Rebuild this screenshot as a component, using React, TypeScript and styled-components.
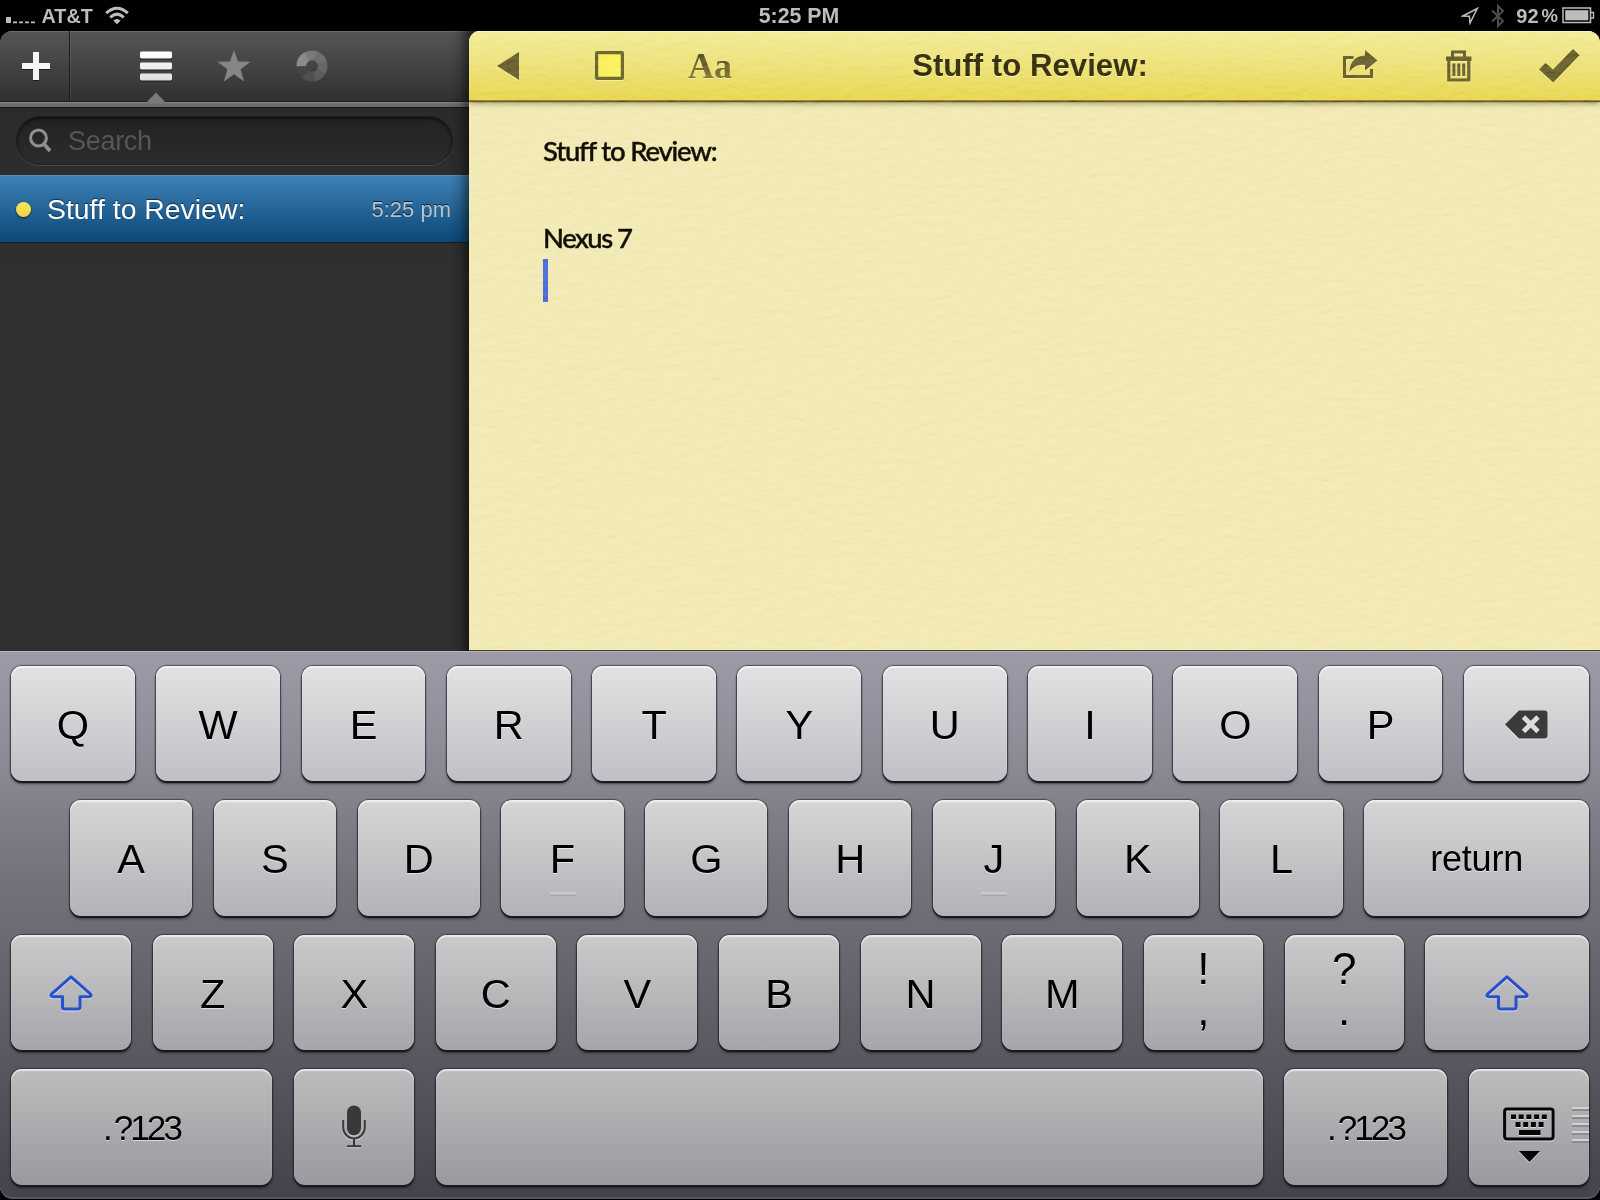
import React from 'react';
import styled, { createGlobalStyle } from 'styled-components';

const GlobalStyle = createGlobalStyle`
  *, *::before, *::after { box-sizing: border-box; }
  body { margin: 0; background: #000; }
`;

const SANS = '"Liberation Sans", Arial, sans-serif';

const Screen = styled.div`
  display: flex;
  flex-direction: column;
  width: 1600px;
  height: 1200px;
  overflow: hidden;
  background: #000;
  font-family: ${SANS};
`;

/* ---------- status bar ---------- */

const StatusBar = styled.header`
  display: grid;
  grid-template-columns: 1fr auto 1fr;
  align-items: center;
  height: 31px;
  padding: 0 5px 0 6px;
  color: #bdbdbd;
  font-weight: bold;
`;

const StatusGroup = styled.div<{ $end?: boolean }>`
  display: flex;
  align-items: center;
  height: 30px;
  justify-content: ${(p) => (p.$end ? 'flex-end' : 'flex-start')};
`;

const StatusText = styled.span<{ $size: number }>`
  font-size: ${(p) => p.$size}px;
  line-height: 30px;
  white-space: nowrap;
`;

const Clock = styled(StatusText)`
  margin-right: 3px;
  height: 30px;
`;

const StatusIcon = styled.svg<{ $ml?: number; $mt?: number }>`
  display: block;
  flex: none;
  margin-left: ${(p) => p.$ml ?? 0}px;
  margin-top: ${(p) => p.$mt ?? 0}px;
`;

/* ---------- workspace ---------- */

const Workspace = styled.main`
  display: flex;
  flex: none;
  height: 620px;
  border-radius: 12px 12px 0 0;
  overflow: hidden;
  background: linear-gradient(#262626, #1b1b1b 80px, #222);
`;

const Sidebar = styled.aside`
  position: relative;
  display: flex;
  flex-direction: column;
  width: 469px;
  background: linear-gradient(#2b2b2b 75px, #303030 240px, #303030);

  &::after {
    content: '';
    position: absolute;
    inset: 0 0 0 auto;
    width: 20px;
    background: linear-gradient(90deg, rgba(0, 0, 0, 0), rgba(0, 0, 0, 0.12) 50%, rgba(0, 0, 0, 0.48));
  }
`;

const SideToolbar = styled.nav`
  display: flex;
  flex: none;
  height: 70px;
  background: linear-gradient(#5a5a5a, #525252 3px, #505050 12px, #303030);
  box-shadow: inset 0 1px #6b6b6b;
`;

const AddButton = styled.button`
  display: flex;
  align-items: center;
  justify-content: center;
  width: 70px;
  padding: 0 0 1px 3px;
  border: 0;
  border-right: 1px solid #1d1d1d;
  background: none;
  box-shadow: 1px 0 rgba(255, 255, 255, 0.07);
`;

const Tabs = styled.div`
  display: flex;
  padding-left: 47px;
`;

const Tab = styled.button`
  position: relative;
  display: flex;
  align-items: center;
  justify-content: center;
  width: 78px;
  padding: 0 0 1px;
  border: 0;
  background: none;
`;

const TabPointer = styled.svg`
  position: absolute;
  left: 29px;
  bottom: -2px;
`;

const SideRule = styled.div`
  flex: none;
  height: 7px;
  border-top: 1px solid #202020;
  border-bottom: 1px solid #161616;
  background: linear-gradient(#858585, #6e6e6e 2px, #696969);
`;

const SearchBox = styled.label`
  display: flex;
  align-items: center;
  flex: none;
  height: 49px;
  margin: 8px 16px 10px;
  padding-left: 12px;
  border: 1px solid #1b1b1b;
  border-bottom-color: #232323;
  border-radius: 25px;
  background: linear-gradient(#222, #2c2c2c);
  box-shadow: inset 0 2px 3px rgba(0, 0, 0, 0.5), 0 1px #4a4a4a;
`;

const SearchText = styled.span`
  margin-left: 16px;
  color: #565656;
  font-size: 27px;
  letter-spacing: -0.3px;
  line-height: 46px;
`;

const NoteRow = styled.div`
  display: flex;
  align-items: center;
  flex: none;
  height: 67px;
  padding: 1px 18px 0 16px;
  background: linear-gradient(#3e82b8, #0c4878);
  box-shadow: inset 0 1px #5790bd, 0 1px #1b1b1b;
`;

const NoteDot = styled.span`
  width: 15px;
  height: 15px;
  border-radius: 50%;
  background: linear-gradient(#f7e763, #edd43c);
  box-shadow: 0 1px 2px rgba(0, 0, 0, 0.7);
`;

const NoteName = styled.span`
  flex: 1;
  margin-left: 16px;
  color: #fff;
  font-size: 28.4px;
  line-height: 59px;
  text-shadow: 0 -1px 1px rgba(0, 0, 0, 0.6);
`;

const NoteTime = styled.span`
  padding-top: 2px;
  color: #b9c3cc;
  font-size: 22px;
  text-shadow: 0 -1px rgba(0, 0, 0, 0.7);
`;

/* ---------- note ---------- */

const Note = styled.section`
  position: relative;
  display: flex;
  flex: 1;
  flex-direction: column;
  overflow: hidden;
  border-bottom: 1px solid #47422f;
  border-radius: 11px 0 0 0;
  background: #f1e8b0;
`;

const Grain = styled.svg`
  position: absolute;
  inset: 0;
  width: 100%;
  height: 100%;
  pointer-events: none;
  mix-blend-mode: soft-light;
  opacity: 0.38;
`;

const NoteToolbar = styled.div`
  display: flex;
  align-items: center;
  flex: none;
  height: 70px;
  padding: 0 20px 0 28px;
  border-bottom: 1px solid #8d8133;
  background: linear-gradient(#f2ea92, #ede27a 40%, #e7d44a);
  box-shadow: inset 0 1px #f8f3bb, 0 1px 1px rgba(60, 50, 0, 0.75), 0 2px 6px rgba(60, 50, 0, 0.55);
`;

const ToolButton = styled.button<{ $ml?: number }>`
  display: flex;
  align-items: center;
  justify-content: center;
  flex: none;
  margin: 0 0 0 ${(p) => p.$ml ?? 0}px;
  padding: 0;
  border: 0;
  background: none;
  filter: drop-shadow(0 1px rgba(255, 250, 180, 0.6));
`;

const FontLabel = styled.span`
  background: linear-gradient(#4f4a1d 20%, #7a7030 80%);
  background-clip: text;
  color: transparent;
  font: bold 36px/40px 'Liberation Serif', 'Times New Roman', serif;
`;

const Title = styled.h1`
  flex: 1;
  margin: 0;
  padding: 0 15px 0 0;
  color: #30290c;
  font-size: 31.2px;
  font-weight: bold;
  text-align: center;
  text-shadow: 0 1px rgba(255, 250, 190, 0.8);
`;

const NoteBody = styled.div`
  padding: 30px 0 0 74px;
  color: #0d0a03;
  font-family: Lato, 'Open Sans', sans-serif;
  font-size: 27.5px;
  font-weight: 500;
  -webkit-text-stroke: 0.5px #0d0a03;
`;

const Line = styled.p<{ $spacing?: number }>`
  height: 43.5px;
  margin: 0;
  letter-spacing: ${(p) => p.$spacing ?? 0}px;
  line-height: 39px;
`;

const Caret = styled.span`
  display: block;
  width: 5px;
  height: 43px;
  margin-top: -3px;
  background: #4766da;
`;

/* ---------- keyboard ---------- */

const Keyboard = styled.section`
  display: flex;
  flex: none;
  flex-direction: column;
  gap: 19px;
  height: 548px;
  padding: 14.5px 11px 0;
  border-radius: 0 0 13px 13px;
  background: linear-gradient(#9d9ba7, #8b8a95 20%, #74747d 40%, #5f5f68 66%, #43434b);
  box-shadow: inset 0 1px #b5b4bd, inset 0 -2px #55555d;
`;

const KeyRow = styled.div<{ $indent?: number }>`
  display: flex;
  gap: 21.5px;
  height: 115.5px;
  padding-left: ${(p) => p.$indent ?? 0}px;
`;

const tones = [
  ['#e2e2e3', '#c0bfc5'],
  ['#d6d6d7', '#b3b2b7'],
  ['#cbcbcc', '#a6a5aa'],
  ['#bdbdbe', '#9a999f'],
];

const KeyCap = styled.button<{ $tone: number; $width?: number }>`
  position: relative;
  display: flex;
  align-items: center;
  justify-content: center;
  flex: ${(p) => (p.$width ? `0 0 ${p.$width}px` : '1 1 0')};
  min-width: 0;
  padding: 0;
  border: 0;
  border-radius: 11px;
  background: linear-gradient(${(p) => tones[p.$tone].join(', ')});
  box-shadow:
    inset 0 2px 1px rgba(255, 255, 255, 0.6),
    0 0 1px 1px rgba(30, 30, 38, 0.6),
    0 2px 1px #15151a,
    0 3px 3px rgba(0, 0, 0, 0.45);
  color: #000;
  font-family: ${SANS};
`;

const Letter = styled.span`
  font-size: 41.5px;
  line-height: 44px;
  padding-top: 3px;
  text-shadow: 0 1px rgba(255, 255, 255, 0.55);
`;

const Word = styled.span<{ $size: number; $spacing: number }>`
  padding-top: 3px;
  font-size: ${(p) => p.$size}px;
  letter-spacing: ${(p) => p.$spacing}px;
  text-shadow: 0 1px rgba(255, 255, 255, 0.55);
`;

const Dot = styled.span`
  letter-spacing: 1px;
`;

const Punctuation = styled.span`
  display: flex;
  flex-direction: column;
  align-items: center;
  padding-bottom: 6px;
  font-size: 44px;
  text-shadow: 0 1px rgba(255, 255, 255, 0.55);
`;

const Mark = styled.span`
  height: 41px;
  line-height: 41px;
`;

const HomeMark = styled.i`
  position: absolute;
  left: calc(50% - 13px);
  bottom: 20px;
  width: 26px;
  height: 4px;
  border-top: 2px solid #cbcbce;
  border-bottom: 1px solid #a9a8ad;
`;

const Grip = styled.span`
  position: absolute;
  top: 38px;
  right: 0;
  display: flex;
  flex-direction: column;
  gap: 4px;
`;

const GripLine = styled.i`
  width: 17px;
  height: 4px;
  border-top: 2px solid #d2d2d4;
  border-bottom: 2px solid #8b8b90;
`;

const KeyIcon = styled.svg<{ $top?: number }>`
  display: block;
  margin-top: ${(p) => p.$top ?? 0}px;
  filter: drop-shadow(0 1px rgba(255, 255, 255, 0.6));
`;

const ShiftIcon = () => (
  <KeyIcon width="46" height="38" viewBox="0 0 46 38" $top={1}>
    <path
      d="M23 2.8 L42.5 20.2 Q44 22.6 41 22.8 H32 V33 Q32 35 30 35 H16.5 Q14.5 35 14.5 33 V22.8 H5 Q2 22.6 3.5 20.2 Z"
      fill="none"
      stroke="#2850cb"
      strokeWidth="3.1"
      strokeLinejoin="round"
    />
  </KeyIcon>
);

const DonutIcon = () => {
  const shades = ['#7a7a7a', '#707070', '#666', '#5c5c5c', '#505050', '#454545'];
  const point = (deg: number, r: number) => {
    const a = (deg * Math.PI) / 180;
    return `${16 + r * Math.cos(a)} ${16 + r * Math.sin(a)}`;
  };
  const wedge = (from: number, to: number) =>
    `M${point(from, 15.5)} A15.5 15.5 0 0 1 ${point(to, 15.5)} L${point(to, 5.8)} A5.8 5.8 0 0 0 ${point(from, 5.8)} Z`;
  return (
    <svg width="32" height="32" viewBox="0 0 32 32">
      <path d={wedge(178, 242)} fill="#8b8b8b" />
      {shades.map((c, i) => (
        <path key={c} d={wedge(240 + i * 50, Math.min(291 + i * 50, 538))} fill={c} />
      ))}
    </svg>
  );
};

const TOP = ['Q', 'W', 'E', 'R', 'T', 'Y', 'U', 'I', 'O', 'P'];
const HOME = ['A', 'S', 'D', 'F', 'G', 'H', 'J', 'K', 'L'];
const BOTTOM = ['Z', 'X', 'C', 'V', 'B', 'N', 'M'];

export default function App() {
  return (
    <Screen>
      <GlobalStyle />
      <StatusBar>
        <StatusGroup>
          <StatusIcon width="30" height="8" viewBox="0 0 30 8" $mt={8}>
            <path d="M0 1h5v6H0z M7 5.5h4v1.7H7z M13 5.5h4v1.7h-4z M19 5.5h4v1.7h-4z M25 5.5h4v1.7h-4z" fill="#bdbdbd" />
          </StatusIcon>
          <StatusText $size={19.8}>&nbsp;AT&amp;T</StatusText>
          <StatusIcon width="24" height="19" viewBox="0 0 24 19" $ml={12}>
            <g fill="none" stroke="#bdbdbd" strokeWidth="3">
              <path d="M1.2 7.2 Q12 -2.8 22.8 7.2" />
              <path d="M5.2 11.3 Q12 4.9 18.8 11.3" />
            </g>
            <path d="M8.3 14.6 Q12 11.4 15.7 14.6 L12 18.3 Z" fill="#bdbdbd" />
          </StatusIcon>
        </StatusGroup>
        <Clock $size={21.3}>5:25 PM</Clock>
        <StatusGroup $end>
          <StatusIcon width="18" height="18" viewBox="0 0 18 18">
            <path d="M16.3 1.5 L1.8 9 L8.4 9.3 L9 16 Z" fill="none" stroke="#bdbdbd" strokeWidth="1.5" />
          </StatusIcon>
          <StatusIcon width="14" height="24" viewBox="0 0 14 24" $ml={12}>
            <path d="M1 6.5 L12 17 L7 22 V2 L12 7 L1 17.5" fill="none" stroke="#4e4e52" strokeWidth="2" />
          </StatusIcon>
          <StatusText $size={20}>&nbsp;&nbsp;92</StatusText>
          <StatusIcon width="3" height="2" />
          <StatusText $size={18.5}>%</StatusText>
          <StatusIcon width="33" height="17" viewBox="0 0 33 17" $ml={4}>
            <path d="M1 1h27.5v14.5H1z" fill="none" stroke="#bdbdbd" strokeWidth="1.5" />
            <path d="M3.2 3.2h23.1v10.1H3.2z" fill="#bdbdbd" />
            <path d="M29 5.5h2.5v5.5H29" fill="none" stroke="#bdbdbd" strokeWidth="1.4" />
          </StatusIcon>
        </StatusGroup>
      </StatusBar>

      <Workspace>
        <Sidebar>
          <SideToolbar>
            <AddButton>
              <svg width="30" height="32" viewBox="0 0 30 32">
                <path d="M12 3h6v11h11v6H18v11h-6V20H1v-6h11z" fill="#1d1d1d" />
                <path d="M12 2h6v11h11v6H18v11h-6V19H1v-6h11z" fill="#f6f6f6" />
              </svg>
            </AddButton>
            <Tabs>
              <Tab>
                <svg width="34" height="32" viewBox="0 0 34 32">
                  <defs>
                    <linearGradient id="bars" x1="0" y1="0" x2="0" y2="1">
                      <stop offset="0" stopColor="#fff" />
                      <stop offset="1" stopColor="#dedede" />
                    </linearGradient>
                  </defs>
                  <path d="M1 3h32v6.5H1z M1 14h32v6.5H1z M1 25h32v6.5H1z" fill="#1c1c1c" />
                  <path d="M2 1.5h30l1 1v5l-1 1H2l-1-1v-5z M2 12.5h30l1 1v5l-1 1H2l-1-1v-5z M2 23.5h30l1 1v5l-1 1H2l-1-1v-5z" fill="url(#bars)" />
                </svg>
                <TabPointer width="20" height="11" viewBox="0 0 20 11">
                  <path d="M0 11 L10 0.5 L20 11 Z" fill="#7a7a7a" />
                </TabPointer>
              </Tab>
              <Tab>
                <svg width="34" height="32" viewBox="0 0 34 32">
                  <path d="M17 0 L21 11.5 L33.5 11.7 L23.6 19.2 L27.2 31.5 L17 24.3 L6.8 31.5 L10.4 19.2 L0.5 11.7 L13 11.5 Z" fill="#868686" />
                </svg>
              </Tab>
              <Tab>
                <DonutIcon />
              </Tab>
            </Tabs>
          </SideToolbar>
          <SideRule />
          <SearchBox>
            <svg width="23" height="25" viewBox="0 0 23 25">
              <circle cx="9.5" cy="10" r="7.9" fill="none" stroke="#8f8f8f" strokeWidth="3" />
              <path d="M14.5 15.5 L21 23" stroke="#8f8f8f" strokeWidth="3.8" />
            </svg>
            <SearchText>Search</SearchText>
          </SearchBox>
          <NoteRow>
            <NoteDot />
            <NoteName>Stuff to Review:</NoteName>
            <NoteTime>5:25 pm</NoteTime>
          </NoteRow>
        </Sidebar>

        <Note>
          <NoteToolbar>
            <ToolButton>
              <svg width="22" height="28" viewBox="0 0 22 28">
                <path d="M22 0 V28 L0 14 Z" fill="#625b28" />
              </svg>
            </ToolButton>
            <ToolButton $ml={76}>
              <svg width="29" height="29" viewBox="0 0 29 29">
                <rect x="1.6" y="1.6" width="25.8" height="25.8" rx="0.5" fill="#fbef57" stroke="#655e29" strokeWidth="3.2" />
              </svg>
            </ToolButton>
            <ToolButton $ml={64}>
              <FontLabel>Aa</FontLabel>
            </ToolButton>
            <Title>Stuff to Review:</Title>
            <ToolButton>
              <svg width="35" height="31" viewBox="0 0 35 31">
                <path d="M10.500 7.500 H1.500 V26.500 H28.500 V19" fill="none" stroke="#625b28" strokeWidth="3" />
                <path d="M22 0 L34.500 10.500 L22 20.500 V15 Q12 13.500 6.500 22 Q7 6.500 22 5.500 Z" fill="#625b28" />
              </svg>
            </ToolButton>
            <ToolButton $ml={68}>
              <svg width="26" height="32" viewBox="0 0 26 32">
                <path d="M6.5 7 V1.9 H18.5 V7" fill="none" stroke="#625b28" strokeWidth="3" />
                <path d="M0 6.5h25.5v4.5H0z" fill="#625b28" />
                <path d="M2.8 10v20h20V10" fill="none" stroke="#625b28" strokeWidth="3.2" />
                <path d="M7.9 13.5v12.5 M12.8 13.5v12.5 M17.7 13.5v12.5" stroke="#625b28" strokeWidth="3" />
              </svg>
            </ToolButton>
            <ToolButton $ml={67}>
              <svg width="41" height="34" viewBox="0 0 41 34">
                <path d="M0 20.5 L6.5 14 L14 20.5 L34 0 L40.5 6.2 L14.2 33.5 Z" fill="#625b28" />
              </svg>
            </ToolButton>
          </NoteToolbar>
          <NoteBody>
            <Line $spacing={-1.2}>Stuff to Review:</Line>
            <Line />
            <Line $spacing={-1.5}>Nexus 7</Line>
            <Caret />
          </NoteBody>
          <Grain>
            <filter id="paper" x="0" y="0" width="100%" height="100%">
              <feTurbulence type="fractalNoise" baseFrequency="0.07 0.16" numOctaves="3" seed="4" result="noise" />
              <feDiffuseLighting in="noise" lightingColor="#fff" surfaceScale="2.2" diffuseConstant="0.75">
                <feDistantLight azimuth="250" elevation="42" />
              </feDiffuseLighting>
            </filter>
            <rect width="100%" height="100%" filter="url(#paper)" />
          </Grain>
        </Note>
      </Workspace>

      <Keyboard>
        <KeyRow>
          {TOP.map((k) => (
            <KeyCap key={k} $tone={0} $width={123.8}>
              <Letter>{k}</Letter>
            </KeyCap>
          ))}
          <KeyCap $tone={0}>
            <KeyIcon width="43" height="29" viewBox="0 0 43 29" $top={3}>
              <path d="M14 0.5 H39.5 Q42.5 0.5 42.5 3.5 V25.5 Q42.5 28.5 39.5 28.5 H14 L0 14.5 Z" fill="#3b3b3b" />
              <path d="M18.5 7 L33 21.5 M33 7 L18.5 21.5" stroke="#dcdcde" strokeWidth="4.8" />
            </KeyIcon>
          </KeyCap>
        </KeyRow>
        <KeyRow $indent={59}>
          {HOME.map((k) => (
            <KeyCap key={k} $tone={1} $width={122.3}>
              <Letter>{k}</Letter>
              {(k === 'F' || k === 'J') && <HomeMark />}
            </KeyCap>
          ))}
          <KeyCap $tone={1}>
            <Word $size={36} $spacing={-0.2}>return</Word>
          </KeyCap>
        </KeyRow>
        <KeyRow>
          <KeyCap $tone={2} $width={120.1}>
            <ShiftIcon />
          </KeyCap>
          {BOTTOM.map((k) => (
            <KeyCap key={k} $tone={2} $width={120.1}>
              <Letter>{k}</Letter>
            </KeyCap>
          ))}
          <KeyCap $tone={2} $width={119.3}>
            <Punctuation>
              <Mark>!</Mark>
              <Mark>,</Mark>
            </Punctuation>
          </KeyCap>
          <KeyCap $tone={2} $width={119.3}>
            <Punctuation>
              <Mark>?</Mark>
              <Mark>.</Mark>
            </Punctuation>
          </KeyCap>
          <KeyCap $tone={2}>
            <ShiftIcon />
          </KeyCap>
        </KeyRow>
        <KeyRow>
          <KeyCap $tone={3} $width={261}>
            <Word $size={35} $spacing={-2.9}>
              <Dot>.</Dot>?123
            </Word>
          </KeyCap>
          <KeyCap $tone={3} $width={120.5}>
            <KeyIcon width="24" height="43" viewBox="0 0 24 43">
              <rect x="5" y="0.5" width="14" height="30" rx="7" fill="#39393b" />
              <path d="M1.2 15 V22.5 A10.8 11 0 0 0 22.8 22.5 V15 M12 33.5 V41" fill="none" stroke="#39393b" strokeWidth="2" />
              <path d="M5 41.2 H19" stroke="#39393b" strokeWidth="2" />
            </KeyIcon>
          </KeyCap>
          <KeyCap $tone={3} />
          <KeyCap $tone={3} $width={163}>
            <Word $size={35} $spacing={-2.9}>
              <Dot>.</Dot>?123
            </Word>
          </KeyCap>
          <KeyCap $tone={3} $width={120.5}>
            <KeyIcon width="52" height="56" viewBox="0 0 52 56" $top={17}>
              <rect x="1.6" y="2.1" width="48.5" height="30" rx="2.5" fill="none" stroke="#050505" strokeWidth="3" />
              <path
                d="M8 7.5h5v4.5H8z M15.7 7.5h5v4.5h-5z M23.4 7.5h5v4.5h-5z M31.1 7.5h5v4.5h-5z M38.8 7.5h5v4.5h-5z M12.5 15h5v5h-5z M20.2 15h5v5h-5z M27.9 15h5v5h-5z M35.6 15h5v5h-5z M16 23h21.5v5H16z M16 44h21L26.5 55z"
                fill="#050505"
              />
            </KeyIcon>
            <Grip>
              <GripLine />
              <GripLine />
              <GripLine />
              <GripLine />
              <GripLine />
            </Grip>
          </KeyCap>
        </KeyRow>
      </Keyboard>
    </Screen>
  );
}
